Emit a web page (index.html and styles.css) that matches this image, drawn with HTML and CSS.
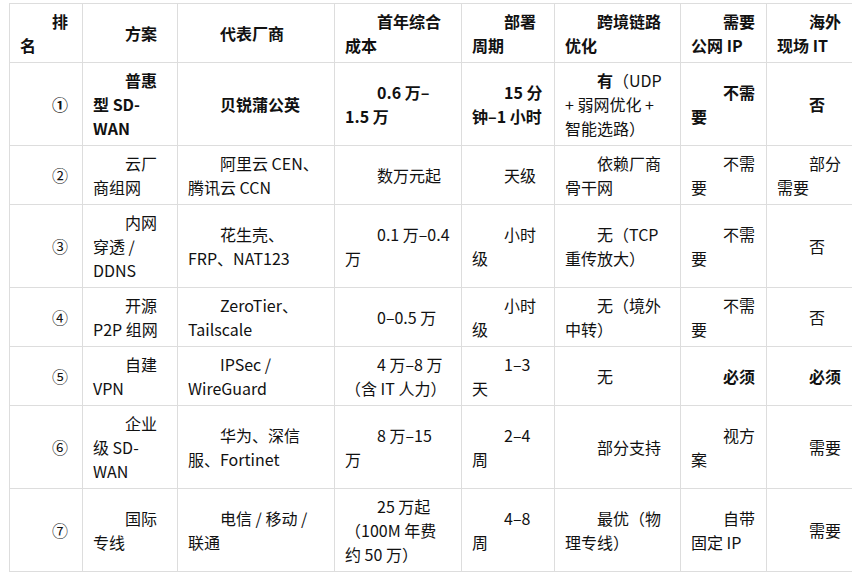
FILE: index.html
```html
<!DOCTYPE html>
<html lang="zh-CN">
<head>
<meta charset="utf-8">
<title>组网方案对比</title>
<link rel="stylesheet" href="styles.css">
</head>
<body>
<table class="cmp">
  <colgroup>
    <col class="c1"><col class="c2"><col class="c3"><col class="c4"><col class="c5"><col class="c6"><col class="c7"><col class="c8">
  </colgroup>
  <thead>
    <tr>
      <th>排名</th><th>方案</th><th>代表厂商</th><th>首年综合成本</th><th>部署周期</th><th>跨境链路优化</th><th>需要公网 IP</th><th>海外现场 IT</th>
    </tr>
  </thead>
  <tbody>
    <tr class="top">
      <td>①</td><td>普惠型 SD-WAN</td><td>贝锐蒲公英</td><td>0.6 万–1.5 万</td><td>15 分钟–1 小时</td><td class="plain"><b>有</b>（UDP + 弱网优化 + 智能选路）</td><td>不需要</td><td>否</td>
    </tr>
    <tr>
      <td>②</td><td>云厂商组网</td><td>阿里云 CEN、腾讯云 CCN</td><td>数万元起</td><td>天级</td><td>依赖厂商骨干网</td><td>不需要</td><td>部分需要</td>
    </tr>
    <tr>
      <td>③</td><td>内网穿透 / DDNS</td><td>花生壳、FRP、NAT123</td><td>0.1 万–0.4 万</td><td>小时级</td><td>无（TCP 重传放大）</td><td>不需要</td><td>否</td>
    </tr>
    <tr>
      <td>④</td><td>开源 P2P 组网</td><td>ZeroTier、Tailscale</td><td>0–0.5 万</td><td>小时级</td><td>无（境外中转）</td><td>不需要</td><td>否</td>
    </tr>
    <tr>
      <td>⑤</td><td>自建 VPN</td><td>IPSec / WireGuard</td><td>4 万–8 万（含 IT 人力）</td><td>1–3 天</td><td>无</td><td><b>必须</b></td><td><b>必须</b></td>
    </tr>
    <tr>
      <td>⑥</td><td>企业级 SD-WAN</td><td>华为、深信服、Fortinet</td><td>8 万–15 万</td><td>2–4 周</td><td>部分支持</td><td>视方案</td><td>需要</td>
    </tr>
    <tr>
      <td>⑦</td><td>国际专线</td><td>电信 / 移动 / 联通</td><td>25 万起（100M 年费约 50 万）</td><td>4–8 周</td><td>最优（物理专线）</td><td>自带固定 IP</td><td>需要</td>
    </tr>
  </tbody>
</table>
</body>
</html>
```

FILE: styles.css
```css
html, body {
  background: #ffffff;
}
body {
  margin: 3px 7px 0 9px;
  font-family: "Noto Sans CJK SC", "Noto Sans", sans-serif;
  font-size: 16px;
  line-height: 24px;
  color: #111111;
}
.cmp {
  width: 843px;
  border-collapse: collapse;
  table-layout: fixed;
}
.cmp .c1 { width: 73px; }
.cmp .c2 { width: 95px; }
.cmp .c3 { width: 157px; }
.cmp .c4 { width: 127px; }
.cmp .c5 { width: 93px; }
.cmp .c6 { width: 126px; }
.cmp .c7 { width: 86px; }
.cmp .c8 { width: 86px; }
.cmp th,
.cmp td {
  border: 1px solid #dddddd;
  padding: 5px 10px;
  text-align: left;
  text-indent: 2em;
  vertical-align: middle;
  line-height: 24px;
}
.cmp th {
  font-weight: 700;
}
.cmp .top td {
  font-weight: 700;
}
.cmp .top td.plain {
  font-weight: 400;
}
.cmp b {
  font-weight: 700;
}
```
